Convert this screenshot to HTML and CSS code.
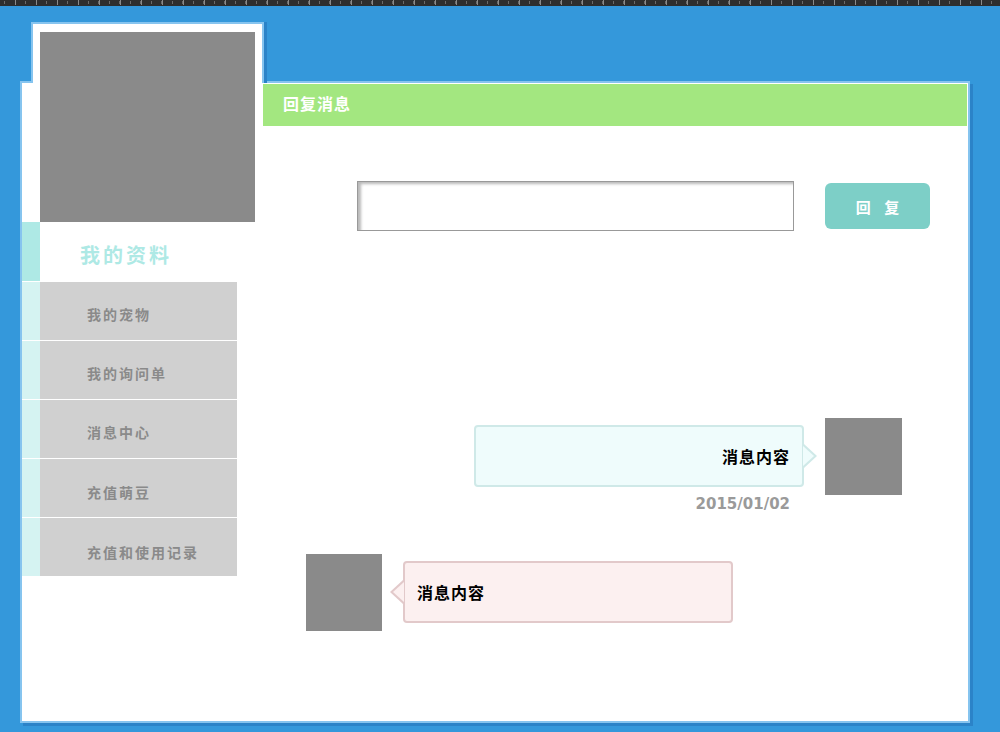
FILE: index.html
```html
<!DOCTYPE html>
<html lang="zh-CN">
<head>
<meta charset="utf-8">
<title>回复消息</title>
<link rel="stylesheet" href="styles.css">
</head>
<body>
<div class="ruler"></div>
<div class="frame">
  <div class="tab"></div>
  <div class="panel">
    <aside class="sidebar">
      <div class="photo"></div>
      <div class="profile"><span class="strip"></span><span class="profile-title">我的资料</span></div>
      <ul class="menu">
        <li class="menu-item"><span class="strip"></span><span class="label">我的宠物</span></li>
        <li class="menu-item"><span class="strip"></span><span class="label">我的询问单</span></li>
        <li class="menu-item"><span class="strip"></span><span class="label">消息中心</span></li>
        <li class="menu-item"><span class="strip"></span><span class="label">充值萌豆</span></li>
        <li class="menu-item"><span class="strip"></span><span class="label">充值和使用记录</span></li>
      </ul>
    </aside>
    <main class="content">
      <div class="title-bar">回复消息</div>
      <div class="reply">
        <input class="reply-input" type="text">
        <button class="reply-btn">回 复</button>
      </div>
      <div class="msg msg-out">
        <div class="bubble-col">
          <div class="bubble bubble-out">消息内容</div>
          <div class="date">2015/01/02</div>
        </div>
        <div class="avatar"></div>
      </div>
      <div class="msg msg-in">
        <div class="avatar avatar-in"></div>
        <div class="bubble bubble-in">消息内容</div>
      </div>
    </main>
  </div>
</div>
</body>
</html>
```
FILE: styles.css
```css
* { box-sizing: border-box; }
html, body { margin: 0; padding: 0; }
body {
  background: #3498db;
  font-family: "Noto Sans CJK SC", "Liberation Sans", sans-serif;
  width: 1000px;
  height: 732px;
  overflow: hidden;
}
.ruler {
  height: 6px;
  background-color: #2e2e2e;
  background-image:
    repeating-linear-gradient(90deg, transparent 0 15px, #8a8a8a 15px 16px, transparent 16px 21px),
    repeating-linear-gradient(90deg, transparent 0 4px, #6a6a6a 4px 5px, transparent 5px 10.5px);
  background-size: 100% 5px, 100% 3px;
  background-position: 0 0, 0 1px;
  background-repeat: no-repeat;
}
.frame {
  margin: 16px 0 0 20px;
}
.tab {
  position: relative;
  z-index: 1;
  margin-left: 11px;
  width: 233px;
  height: 61px;
  margin-bottom: -2px;
  background: #fff;
  border: 2px solid #86c4ef;
  border-bottom: none;
  box-shadow: 3px 0 0 #2b83c8;
}
.panel {
  display: flex;
  width: 950px;
  height: 642px;
  background: #fff;
  border: 2px solid #86c4ef;
  box-shadow: 3px 3px 0 #2b83c8;
}
.sidebar {
  position: relative;
  z-index: 2;
  width: 241px;
  flex: none;
  margin-top: -51px;
}
.photo {
  margin-left: 18px;
  width: 215px;
  height: 190px;
  background: #8a8a8a;
}
.profile {
  display: flex;
  height: 59px;
}
.strip {
  width: 18px;
  flex: none;
}
.profile .strip { background: #aee9e5; }
.profile-title {
  padding-left: 40px;
  padding-top: 6px;
  display: flex;
  align-items: center;
  font-size: 20px;
  font-weight: bold;
  letter-spacing: 3px;
  color: #aee9e5;
}
.menu {
  list-style: none;
  margin: 0;
  padding: 0;
}
.menu-item {
  display: flex;
  height: 59px;
  border-top: 1px solid #fff;
}
.menu-item .strip { background: #d5f3f2; }
.menu-item .label {
  width: 197px;
  background: #d0d0d0;
  padding: 5px 0 0 47px;
  display: flex;
  align-items: center;
  font-size: 14px;
  font-weight: bold;
  letter-spacing: 2px;
  color: #8a8a8a;
}
.menu-item:nth-child(4) .label { padding-top: 7px; }
.menu-item:nth-child(5) .label { padding-top: 9px; }
.content {
  flex: 1;
  display: flex;
  flex-direction: column;
}
.title-bar {
  margin: 1px 1px 0 0;
  height: 42px;
  line-height: 38px;
  background: #a3e780;
  color: #fff;
  padding-left: 20px;
  font-size: 16px;
  font-weight: bold;
  letter-spacing: 1px;
}
.reply {
  display: flex;
  align-items: center;
  margin-top: 55px;
  padding-left: 94px;
}
.reply-input {
  width: 437px;
  height: 50px;
  border: 1px solid #999;
  box-shadow: inset 4px 3px 3px -1px rgba(0, 0, 0, 0.28);
  background: #fff;
  outline: none;
}
.reply-btn {
  margin-left: 31px;
  width: 105px;
  height: 46px;
  border: none;
  border-radius: 6px;
  background: #7dcfc7;
  color: #fff;
  font-family: inherit;
  font-size: 15px;
  font-weight: bold;
  word-spacing: 10px;
  padding: 0;
}
.msg {
  display: flex;
  align-items: flex-start;
}
.msg-out {
  margin-top: 187px;
  justify-content: flex-end;
  padding-right: 66px;
}
.msg-in {
  margin-top: 41px;
  padding-left: 43px;
}
.avatar {
  width: 77px;
  height: 77px;
  background: #8a8a8a;
  flex: none;
}
.avatar-in { width: 76px; }
.bubble-col {
  margin-top: 7px;
  margin-right: 21px;
}
.bubble {
  position: relative;
  width: 330px;
  height: 62px;
  border: 2px solid;
  border-radius: 4px;
  display: flex;
  align-items: center;
  font-size: 16px;
  font-weight: bold;
  letter-spacing: 1px;
  color: #000;
}
.bubble-out {
  background: #effcfc;
  border-color: #cfe9e8;
  justify-content: flex-end;
  padding-right: 12px;
  padding-bottom: 1px;
}
.bubble-in {
  margin-top: 7px;
  margin-left: 21px;
  background: #fcf0f0;
  border-color: #e2c9ca;
  padding-left: 12px;
}
.bubble::before, .bubble::after {
  content: "";
  position: absolute;
  top: 50%;
  width: 0;
  height: 0;
  border-style: solid;
  border-color: transparent;
}
.bubble-out::before {
  right: -15px;
  margin-top: -12px;
  border-width: 12px 0 12px 13px;
  border-left-color: #cfe9e8;
}
.bubble-out::after {
  right: -12px;
  margin-top: -10px;
  border-width: 10px 0 10px 11px;
  border-left-color: #effcfc;
}
.bubble-in::before {
  left: -15px;
  margin-top: -12px;
  border-width: 12px 13px 12px 0;
  border-right-color: #e2c9ca;
}
.bubble-in::after {
  left: -12px;
  margin-top: -10px;
  border-width: 10px 11px 10px 0;
  border-right-color: #fcf0f0;
}
.date {
  margin-top: 8px;
  padding-right: 14px;
  text-align: right;
  font-family: "DejaVu Sans", sans-serif;
  font-size: 15px;
  line-height: 18px;
  font-weight: bold;
  color: #9a9a9a;
}
```
